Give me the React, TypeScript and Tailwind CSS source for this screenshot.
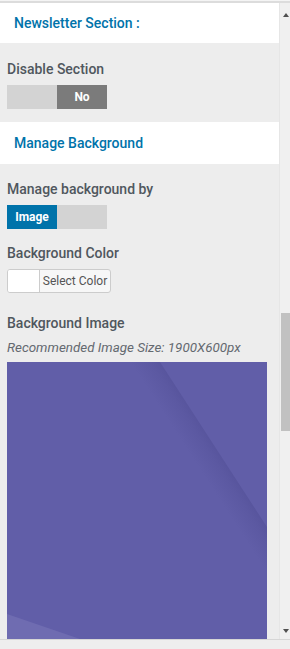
import type { ReactNode } from "react";

const font = { fontFamily: "Roboto, 'Liberation Sans', sans-serif" };

function SectionHeader({ children, className }: { children: ReactNode; className: string }) {
  return (
    <div className={`flex items-center bg-white px-[14px] text-[14px] font-medium text-[#0073aa] ${className}`}>
      {children}
    </div>
  );
}

function Label({ children, className = "" }: { children: ReactNode; className?: string }) {
  return (
    <div className={`px-[7px] text-[14px] leading-[20px] font-medium text-[#50575e] ${className}`}>
      {children}
    </div>
  );
}

// Two-state switch, the active half carries the label.
function Toggle({ left, right }: { left?: string; right?: string }) {
  return (
    <div className="mx-[7px] mt-[6px] flex h-[24px] w-[100px] text-[12px] font-bold text-white">
      <div className={`flex w-[50px] items-center justify-center ${left ? "bg-[#0073aa]" : "bg-[#d3d3d3]"}`}>
        {left}
      </div>
      <div className={`flex w-[50px] items-center justify-center ${right ? "bg-[#7b7b7b]" : "bg-[#d3d3d3]"}`}>
        {right}
      </div>
    </div>
  );
}

function BackgroundPreview() {
  return (
    <svg width="260" height="300" viewBox="0 0 260 300" className="block">
      <defs>
        {/* shadow that darkens toward the fold line, zero at the band's left edge */}
        <linearGradient id="fold" gradientUnits="userSpaceOnUse" x1="132" y1="13.6" x2="153" y2="0">
          <stop offset="0" stopColor="#4f4c93" stopOpacity="0" />
          <stop offset="0.7" stopColor="#4f4c93" stopOpacity="0.3" />
          <stop offset="1" stopColor="#4f4c93" stopOpacity="0.5" />
        </linearGradient>
      </defs>
      <rect width="260" height="300" fill="#615ea8" />
      <polygon points="123,0 153,0 260,165 260,211" fill="url(#fold)" />
      <polygon points="0,252 73,277 90,300 0,300" fill="#6f6cb1" />
    </svg>
  );
}

export default function App() {
  return (
    <div className="flex h-[649px] w-[290px] flex-col overflow-hidden bg-[#ededed]" style={font}>
      <div className="h-[3px] shrink-0 border-b-2 border-[#dcdcdc] bg-[#f4f4f4]" />

      <div className="flex min-h-0 flex-1">
        <main className="w-[279px] overflow-hidden">
          <SectionHeader className="h-[40px]">Newsletter Section :</SectionHeader>

          <Label className="mt-[16px]">Disable Section</Label>
          <Toggle right="No" />

          <SectionHeader className="mt-[13px] h-[42px]">Manage Background</SectionHeader>

          <Label className="mt-[15px]">Manage background by</Label>
          <Toggle left="Image" />

          <Label className="mt-[14px]">Background Color</Label>
          <button className="mx-[7px] mt-[6px] flex h-[24px] w-[104px] overflow-hidden rounded-[3px] border border-[#cccccc] bg-[#f7f7f7] text-[12px] text-[#555555]">
            <span className="h-full w-[32px] border-r border-[#cccccc] bg-white" />
            <span className="flex flex-1 items-center justify-center">Select Color</span>
          </button>

          <Label className="mt-[20px]">Background Image</Label>
          <div className="mt-[5px] px-[7px] text-[13.4px] leading-[20px] italic text-[#646970]">
            Recommended Image Size: 1900X600px
          </div>
          <div className="mx-[7px] mt-[4px]">
            <BackgroundPreview />
          </div>
        </main>

        {/* scrollbar */}
        <div className="flex w-[11px] flex-col border-l border-[#e6e6e6] bg-[#f0f0f0]">
          <div className="flex h-[14px] items-end justify-center pl-[2px]">
            <span className="h-0 w-0 border-x-[3px] border-b-[4px] border-x-transparent border-b-[#505050]" />
          </div>
          <div className="mt-[296px] ml-[1px] h-[118px] bg-[#c1c1c1]" />
          <div className="flex flex-1 items-end justify-center pb-[6px] pl-[2px]">
            <span className="h-0 w-0 border-x-[3px] border-t-[4px] border-x-transparent border-t-[#505050]" />
          </div>
        </div>
      </div>

      <div className="h-[10px] shrink-0 border-t border-[#d6d6d6] bg-[#eeeeee]" />
    </div>
  );
}
